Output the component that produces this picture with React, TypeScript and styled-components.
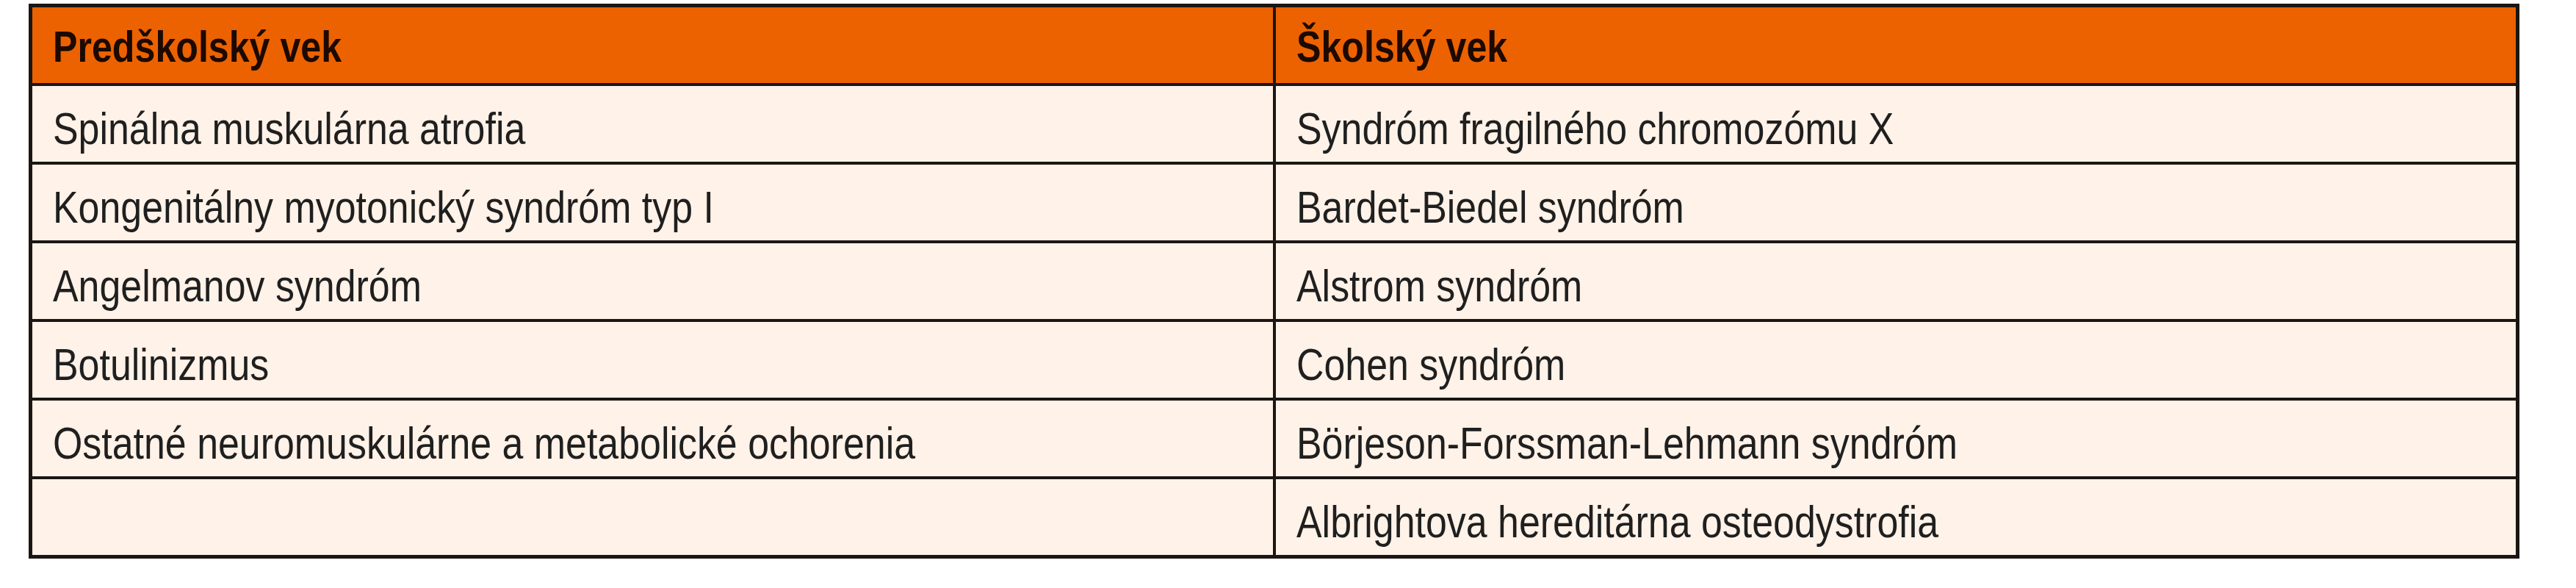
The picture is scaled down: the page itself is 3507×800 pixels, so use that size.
import React from 'react';
import styled, { createGlobalStyle } from 'styled-components';

const GlobalStyle = createGlobalStyle`
  html, body {
    margin: 0;
    padding: 0;
    background: #ffffff;
  }
`;

const Page = styled.div`
  padding: 5px 0 0 39px;
`;

const Table = styled.div`
  display: grid;
  grid-template-columns: 1fr 1fr;
  grid-auto-rows: 103px;
  gap: 4px;
  width: 3391px;
  box-sizing: border-box;
  border: 5px solid #1b1613;
  background: #1b1613;
`;

const Cell = styled.div<{ $head?: boolean }>`
  display: flex;
  align-items: center;
  box-sizing: border-box;
  padding: ${(p) => (p.$head ? '6px 28px 0' : '12px 28px 0')};
  background: ${(p) => (p.$head ? '#ec6200' : '#fff2e8')};
  color: ${(p) => (p.$head ? '#1c0900' : '#1f1f1f')};
  font-family: 'Liberation Sans Narrow', 'Liberation Sans', Arial, sans-serif;
  font-size: ${(p) => (p.$head ? '59px' : '62px')};
  font-weight: ${(p) => (p.$head ? 700 : 400)};
  line-height: 1;
  white-space: nowrap;
`;

// the source uses a condensed face; squeeze the regular one to its width
const Label = styled.span<{ $head?: boolean }>`
  display: inline-block;
  transform: scaleX(${(p) => (p.$head ? 0.85 : 0.837)});
  transform-origin: left center;
`;

const header = ['Predškolský vek', 'Školský vek'];

const rows: [string, string][] = [
  ['Spinálna muskulárna atrofia', 'Syndróm fragilného chromozómu X'],
  ['Kongenitálny myotonický syndróm typ I', 'Bardet-Biedel syndróm'],
  ['Angelmanov syndróm', 'Alstrom syndróm'],
  ['Botulinizmus', 'Cohen syndróm'],
  ['Ostatné neuromuskulárne a metabolické ochorenia', 'Börjeson-Forssman-Lehmann syndróm'],
  ['', 'Albrightova hereditárna osteodystrofia'],
];

const App: React.FC = () => {
  return (
    <>
      <GlobalStyle />
      <Page>
        <Table>
          {header.map((h) => (
            <Cell key={h} $head>
              <Label $head>{h}</Label>
            </Cell>
          ))}
          {rows.map(([a, b], i) => (
            <React.Fragment key={i}>
              <Cell>{a && <Label>{a}</Label>}</Cell>
              <Cell>
                <Label>{b}</Label>
              </Cell>
            </React.Fragment>
          ))}
        </Table>
      </Page>
    </>
  );
};

export default App;
